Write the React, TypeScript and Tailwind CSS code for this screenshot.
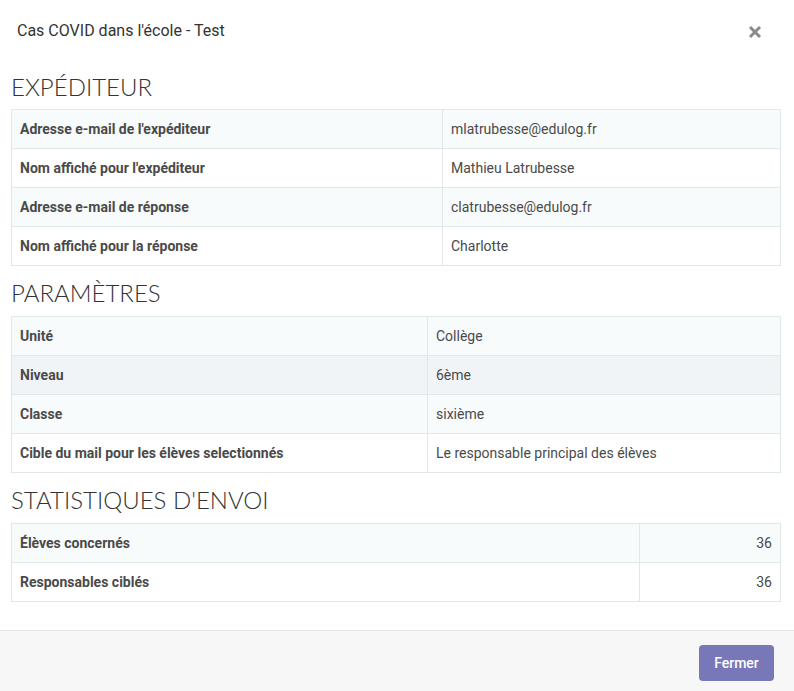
import React from "react";

type Row = { label: string; value: string; hover?: boolean };

function DataTable({ rows, labelWidth, alignRight }: { rows: Row[]; labelWidth: string; alignRight?: boolean }) {
  return (
    <table className="w-full border-collapse text-[14px] text-[#4a4a4a]" style={{ tableLayout: "fixed" }}>
      <colgroup>
        <col style={{ width: labelWidth }} />
        <col />
      </colgroup>
      <tbody>
        {rows.map((r, i) => (
          <tr
            key={r.label}
            className={r.hover ? "bg-[#f1f4f7]" : i % 2 === 0 ? "bg-[#f8fbfc]" : "bg-white"}
          >
            <td className="h-[39px] border border-[#e1e8ea] px-2 font-bold">{r.label}</td>
            <td className={`h-[39px] border border-[#e1e8ea] px-2 ${alignRight ? "text-right" : ""}`}>{r.value}</td>
          </tr>
        ))}
      </tbody>
    </table>
  );
}

function Heading({ children, first }: { children: React.ReactNode; first?: boolean }) {
  return (
    <h2
      className={`${first ? "mb-2" : "mt-[13px] mb-[9px]"} h-[28px] text-[24px] font-light leading-[28px] text-[#333]`}
      style={{ fontFamily: "Lato, 'Open Sans', sans-serif" }}
    >
      {children}
    </h2>
  );
}

export default function App() {
  return (
    <div className="flex h-[691px] w-[794px] flex-col bg-white" style={{ fontFamily: "Roboto, 'Liberation Sans', sans-serif" }}>
      <div className="flex h-[62px] items-center justify-between pl-[17px] pr-[32px]">
        <div className="text-[16px] text-[#333]">Cas COVID dans l'école - Test</div>
        <svg width="14" height="14" viewBox="0 0 14 14" className="mt-[2px]">
          <path d="M2 2 L12 12 M12 2 L2 12" stroke="#8a8a8a" strokeWidth="3" strokeLinecap="butt" />
        </svg>
      </div>
      <div className="flex-1 pl-[11px] pr-[13px] pt-[11px]">
        <Heading first>EXPÉDITEUR</Heading>
        <DataTable
          labelWidth="431px"
          rows={[
            { label: "Adresse e-mail de l'expéditeur", value: "mlatrubesse@edulog.fr" },
            { label: "Nom affiché pour l'expéditeur", value: "Mathieu Latrubesse" },
            { label: "Adresse e-mail de réponse", value: "clatrubesse@edulog.fr" },
            { label: "Nom affiché pour la réponse", value: "Charlotte" },
          ]}
        />
        <Heading>PARAMÈTRES</Heading>
        <DataTable
          labelWidth="416px"
          rows={[
            { label: "Unité", value: "Collège" },
            { label: "Niveau", value: "6ème", hover: true },
            { label: "Classe", value: "sixième" },
            { label: "Cible du mail pour les élèves selectionnés", value: "Le responsable principal des élèves" },
          ]}
        />
        <Heading>STATISTIQUES D'ENVOI</Heading>
        <DataTable
          labelWidth="628px"
          alignRight
          rows={[
            { label: "Élèves concernés", value: "36" },
            { label: "Responsables ciblés", value: "36" },
          ]}
        />
      </div>
      <div className="flex h-[61px] justify-end border-t border-[#e3e3e6] bg-[#f7f7f7] pr-[20px] pt-[14px]">
        <button className="h-[36px] w-[75px] rounded-[4px] bg-[#7878b8] text-[14px] font-medium text-white">Fermer</button>
      </div>
    </div>
  );
}
